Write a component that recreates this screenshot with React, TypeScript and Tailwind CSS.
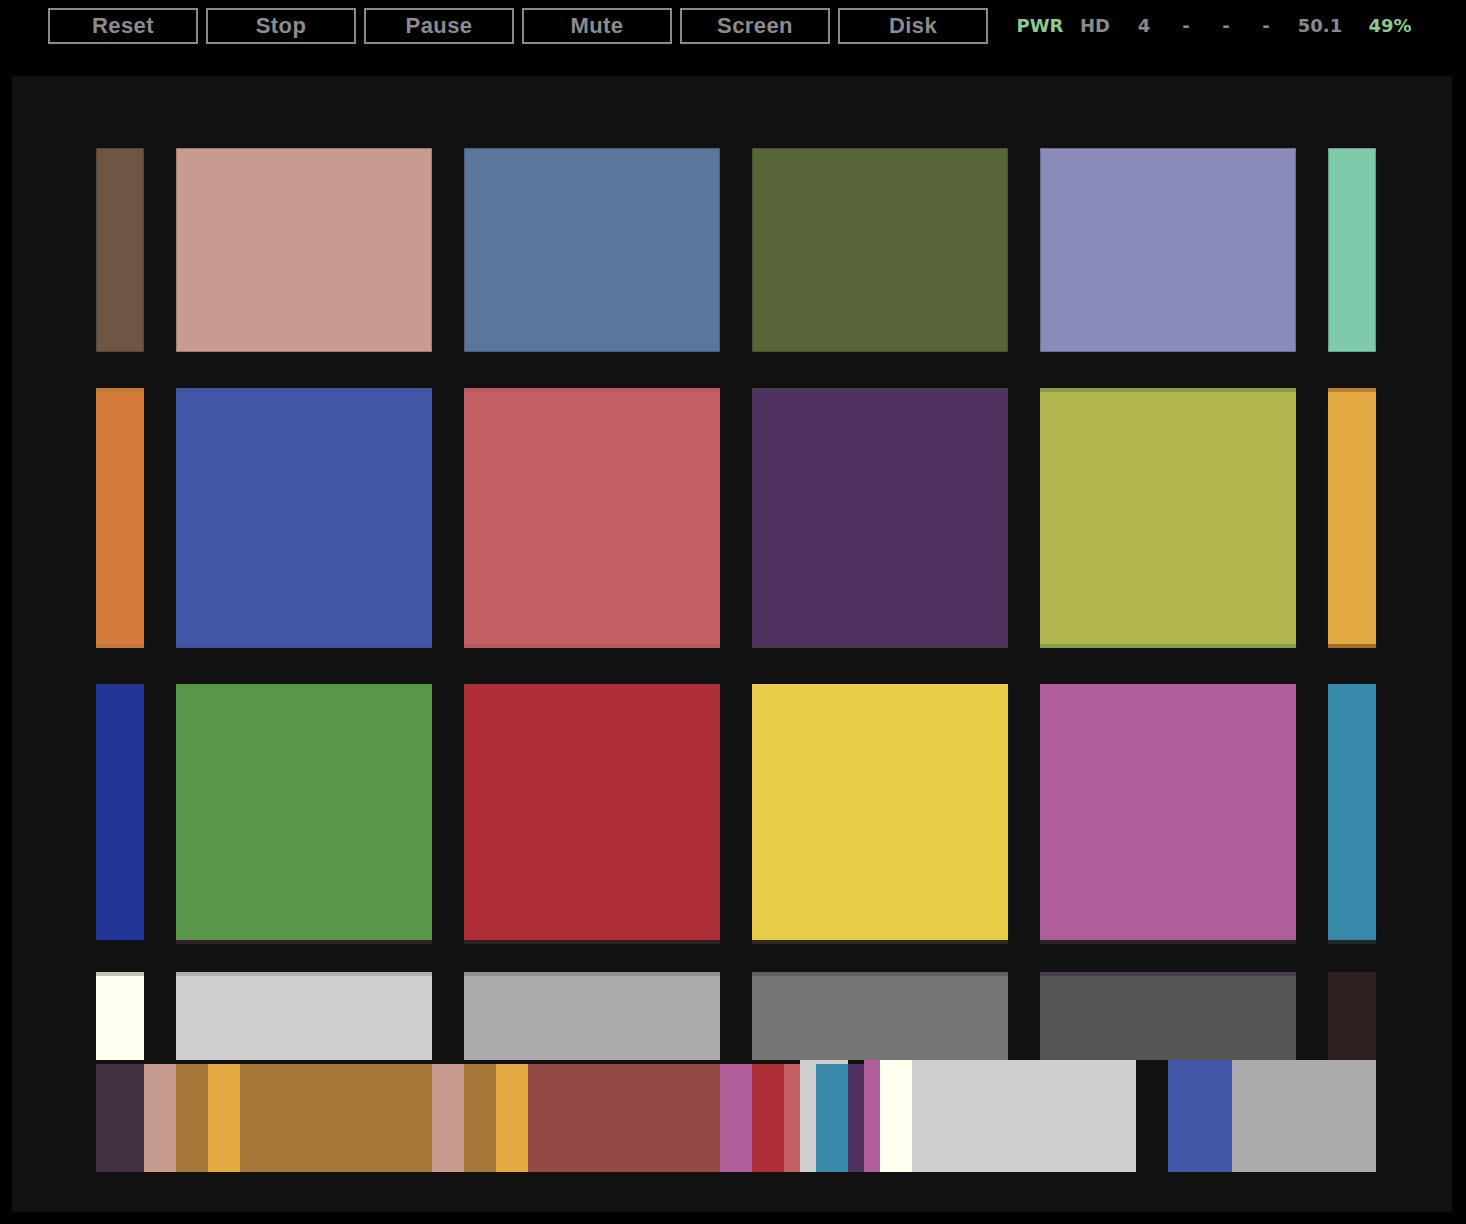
import React from "react";

type Cell = { w: string; cls: string };

const row1: string[] = [
  "w-[48px] bg-[#6f5644]",
  "w-[256px] bg-[#c79b8f]",
  "w-[256px] bg-[#5a769a]",
  "w-[256px] bg-[#586538]",
  "w-[256px] bg-[#8b8bba]",
  "w-[48px] bg-[#7fcaab]",
];

const row2: string[] = [
  "w-[48px] bg-[#d47b3a] border-t-4 border-b-4 border-t-[#c07a3c] border-b-[#c4773a]",
  "w-[256px] bg-[#4357a6] border-t-4 border-b-4 border-t-[#3f539e] border-b-[#3f539e]",
  "w-[256px] bg-[#c25e64] border-t-4 border-b-4 border-t-[#b65a60] border-b-[#b65a60]",
  "w-[256px] bg-[#4e315f] border-t-4 border-b-4 border-t-[#4a3852] border-b-[#4a3852]",
  "w-[256px] bg-[#b1b64e] border-t-4 border-b-4 border-t-[#859e47] border-b-[#859e47]",
  "w-[48px] bg-[#e3a942] border-t-4 border-b-4 border-t-[#b97f3a] border-b-[#a46d2c]",
];

const row3: string[] = [
  "w-[48px] bg-[#223597] border-b-4 border-b-[#111111]",
  "w-[256px] bg-[#5a964a] border-b-4 border-b-[#2c2222]",
  "w-[256px] bg-[#ae2e37] border-b-4 border-b-[#2e2222]",
  "w-[256px] bg-[#e8cd48] border-b-4 border-b-[#2c2a22]",
  "w-[256px] bg-[#b05e99] border-b-4 border-b-[#2c2228]",
  "w-[48px] bg-[#3889a9] border-b-4 border-b-[#22282c]",
];

const row4: string[] = [
  "w-[48px] bg-[#fffff0] border-t-4 border-t-[#c4c4bc]",
  "w-[256px] bg-[#cfcfcf] border-t-4 border-t-[#b0b0b0]",
  "w-[256px] bg-[#acaaac] border-t-4 border-t-[#939293]",
  "w-[256px] bg-[#757674] border-t-4 border-t-[#606160]",
  "w-[256px] bg-[#555654] border-t-4 border-t-[#4a3d4a]",
  "w-[48px] bg-[#2f2020]",
];

const strip: Cell[] = [
  { w: "w-[48px]", cls: "mt-1 bg-[#413340]" },
  { w: "w-[32px]", cls: "mt-1 bg-[#c79b8f]" },
  { w: "w-[32px]", cls: "mt-1 bg-[#a57736]" },
  { w: "w-[32px]", cls: "mt-1 bg-[#e3a942]" },
  { w: "w-[192px]", cls: "mt-1 bg-[#a57736]" },
  { w: "w-[32px]", cls: "mt-1 bg-[#c79b8f]" },
  { w: "w-[32px]", cls: "mt-1 bg-[#a57736]" },
  { w: "w-[32px]", cls: "mt-1 bg-[#e3a942]" },
  { w: "w-[192px]", cls: "mt-1 bg-[#934a44]" },
  { w: "w-[32px]", cls: "mt-1 bg-[#b05e99]" },
  { w: "w-[32px]", cls: "mt-1 bg-[#ae2e37]" },
  { w: "w-[16px]", cls: "mt-1 bg-[#c25e64]" },
  { w: "w-[16px]", cls: "bg-[#cfcfcf]" },
  { w: "w-[32px]", cls: "bg-[#3889a9] border-t-4 border-t-[#cfcfcf]" },
  { w: "w-[16px]", cls: "mt-1 bg-[#4e315f]" },
  { w: "w-[16px]", cls: "bg-[#b05e99]" },
  { w: "w-[32px]", cls: "bg-[#fffff0]" },
  { w: "w-[224px]", cls: "bg-[#cfcfcf]" },
  { w: "w-[32px]", cls: "" },
  { w: "w-[64px]", cls: "bg-[#4357a6]" },
  { w: "w-[144px]", cls: "bg-[#acaaac]" },
];

function Row({ cells, h, mt, edge }: { cells: string[]; h: string; mt: string; edge?: boolean }) {
  return (
    <div className={`flex gap-8 ${h} ${mt}`}>
      {cells.map((c, i) => (
        <div
          key={i}
          className={`h-full box-border ${c} ${edge ? "shadow-[inset_0_0_0_1px_rgba(0,0,0,0.2)]" : ""}`}
        />
      ))}
    </div>
  );
}

const buttons = ["Reset", "Stop", "Pause", "Mute", "Screen", "Disk"];

const status: { t: string; green?: boolean; ml: string }[] = [
  { t: "PWR", green: true, ml: "ml-[32px]" },
  { t: "HD", ml: "ml-[15px]" },
  { t: "4", ml: "ml-[9px]" },
  { t: "-", ml: "ml-[2px]" },
  { t: "-", ml: "ml-0" },
  { t: "-", ml: "ml-0" },
  { t: "50.1", ml: "ml-[14px]" },
  { t: "49%", green: true, ml: "ml-[30px]" },
];

export default function App() {
  return (
    <div className="w-[1466px] h-[1224px] bg-black overflow-hidden">
      <div className="h-[76px] flex items-start pt-2 pl-12">
        <div className="flex gap-2">
          {buttons.map((b) => (
            <div
              key={b}
              className="w-[150px] h-[36px] border-2 border-[#8a8a8a] flex items-center justify-center text-[22px] font-bold tracking-[0.4px] text-[#8c8c8c] leading-none"
              style={{ fontFamily: '"Liberation Sans", Arial, sans-serif' }}
            >
              {b}
            </div>
          ))}
        </div>
        <div
          className="flex h-[36px] items-center"
          style={{ fontFamily: '"DejaVu Sans", Verdana, sans-serif' }}
        >
          {status.map((s, i) => (
            <div
              key={i}
              className={`w-10 flex justify-center text-[18px] font-bold leading-none whitespace-nowrap ${s.ml} ${
                s.green ? "text-[#8fca8a]" : "text-[#8a8a8a]"
              }`}
            >
              {s.t}
            </div>
          ))}
        </div>
      </div>
      <div className="ml-3 w-[1440px] h-[1136px] bg-[#111111] pl-[84px] pt-[72px] box-border">
        <Row cells={row1} h="h-[204px]" mt="mt-0" edge />
        <Row cells={row2} h="h-[260px]" mt="mt-[36px]" />
        <Row cells={row3} h="h-[260px]" mt="mt-[36px]" />
        <Row cells={row4} h="h-[88px]" mt="mt-[28px]" />
        <div className="flex h-[112px]">
          {strip.map((s, i) => (
            <div key={i} className={`${s.w} h-full flex flex-col`}>
              <div className={`flex-1 box-border ${s.cls}`} />
            </div>
          ))}
        </div>
      </div>
    </div>
  );
}
